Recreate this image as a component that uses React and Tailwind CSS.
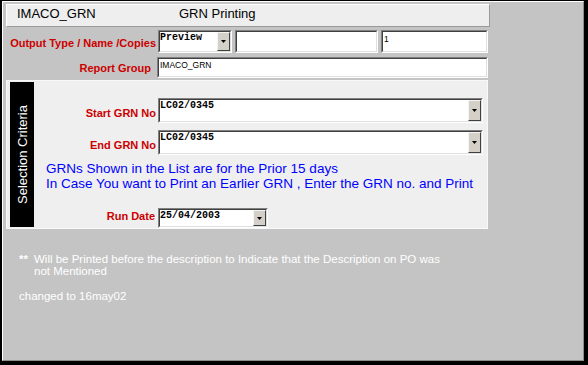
import React from "react";

function Field({ className = "", children }) {
  return (
    <div
      className={
        "flex border-t border-l border-t-[#808080] border-l-[#808080] border-b border-r border-b-white border-r-white " +
        className
      }
    >
      <div className="flex-1 min-w-0 flex border-t border-l border-t-[#404040] border-l-[#404040] border-b border-r border-b-[#dfdfdf] border-r-[#dfdfdf] bg-white">
        {children}
      </div>
    </div>
  );
}

function DropBtn() {
  return (
    <div className="w-[13px] h-full bg-[#d4d0c8] border-t border-l border-t-[#f4f4f4] border-l-[#f4f4f4] border-b border-r border-b-[#404040] border-r-[#404040] flex items-center justify-center">
      <svg width="5" height="3" viewBox="0 0 5 3">
        <path d="M0 0h5L2.5 3z" fill="#000" />
      </svg>
    </div>
  );
}

function Combo({ className = "", text }) {
  return (
    <Field className={className}>
      <div className="flex-1 pt-px text-[10px] leading-[10px] font-bold font-['Liberation_Mono',monospace] text-black">
        {text}
      </div>
      <DropBtn />
    </Field>
  );
}

export default function App() {
  return (
    <div className="w-[588px] h-[365px] bg-black pt-px pl-[2px] pr-[4px] pb-[4px] flex font-['Liberation_Sans',Arial,sans-serif]">
      <div className="flex-1 flex flex-col bg-[#c4c4c4] border-t border-l border-t-white border-l-white border-b border-r border-b-[#8c8c8c] border-r-[#8c8c8c] pl-[3px]">
        {/* header */}
        <div className="mt-[2px] w-[484px] h-[23px] bg-[#eeeeee] border-t border-l border-t-white border-l-white border-b border-r border-b-[#9a9a9a] border-r-[#9a9a9a] flex items-start pt-px pl-[10px] text-[13px] leading-[15px] text-black">
          <span className="w-[162px]">IMACO_GRN</span>
          <span>GRN Printing</span>
        </div>

        {/* row 1 */}
        <div className="mt-[3px] flex h-[23px]">
          <div className="w-[152px] pr-[2px] pt-[7px] text-right text-[11px] leading-[13px] font-bold text-[#cc0000] whitespace-nowrap">
            Output Type / Name /Copies
          </div>
          <Combo className="w-[74px]" text="Preview" />
          <Field className="ml-[3px] w-[143px]" />
          <Field className="ml-[3px] w-[107px]">
            <div className="pl-px pt-[2px] text-[8.5px] leading-[10px] text-black">1</div>
          </Field>
        </div>

        {/* row 2 */}
        <div className="mt-[4px] flex h-[21px]">
          <div className="w-[151px] pr-[6px] pt-[5px] text-right text-[11px] leading-[13px] font-bold text-[#cc0000] whitespace-nowrap">
            Report Group
          </div>
          <Field className="w-[331px]">
            <div className="pl-px pt-px text-[8.5px] leading-[10px] text-black">IMACO_GRN</div>
          </Field>
        </div>

        {/* selection criteria panel */}
        <div className="mt-[2px] w-[482px] h-[149px] bg-[#efefef] border border-[#f8f8f8] flex">
          <div className="ml-[3px] my-px w-[24px] bg-black flex items-center justify-center">
            <span className="[writing-mode:vertical-rl] rotate-180 text-white text-[13px] leading-[15px] whitespace-nowrap">
              Selection Criteria
            </span>
          </div>
          <div className="flex-1 flex flex-col">
            <div className="mt-[17px] flex h-[25px]">
              <div className="w-[124px] pr-[2px] pt-[9px] text-right text-[11px] leading-[13px] font-bold text-[#cc0000] whitespace-nowrap">
                Start GRN No
              </div>
              <Combo className="w-[325px]" text="LC02/0345" />
            </div>
            <div className="mt-[7px] flex h-[25px]">
              <div className="w-[124px] pr-[2px] pt-[9px] text-right text-[11px] leading-[13px] font-bold text-[#cc0000] whitespace-nowrap">
                End GRN No
              </div>
              <Combo className="w-[325px]" text="LC02/0345" />
            </div>
            <div className="mt-[6px] ml-[12px] text-[13.5px] leading-[15px] text-[#0000ff] whitespace-nowrap">
              <div>GRNs Shown in the List are for the Prior 15 days</div>
              <div>In Case You want to Print an Earlier GRN , Enter the GRN no. and Print</div>
            </div>
            <div className="mt-[17px] flex h-[20px]">
              <div className="w-[124px] pr-[3px] pt-[2px] text-right text-[11px] leading-[13px] font-bold text-[#cc0000] whitespace-nowrap">
                Run Date
              </div>
              <Combo className="w-[110px]" text="25/04/2003" />
            </div>
          </div>
        </div>

        {/* notes */}
        <div className="mt-[24px] pl-[13px] flex text-[11.5px] leading-[12px] text-white">
          <span className="w-[15px] font-bold">**</span>
          <div>
            Will be Printed before the description to Indicate that the Description on PO was
            <br />
            not Mentioned
          </div>
        </div>
        <div className="mt-[13px] pl-[13px] text-[11.5px] leading-[12px] text-white">changed to 16may02</div>
      </div>
    </div>
  );
}
